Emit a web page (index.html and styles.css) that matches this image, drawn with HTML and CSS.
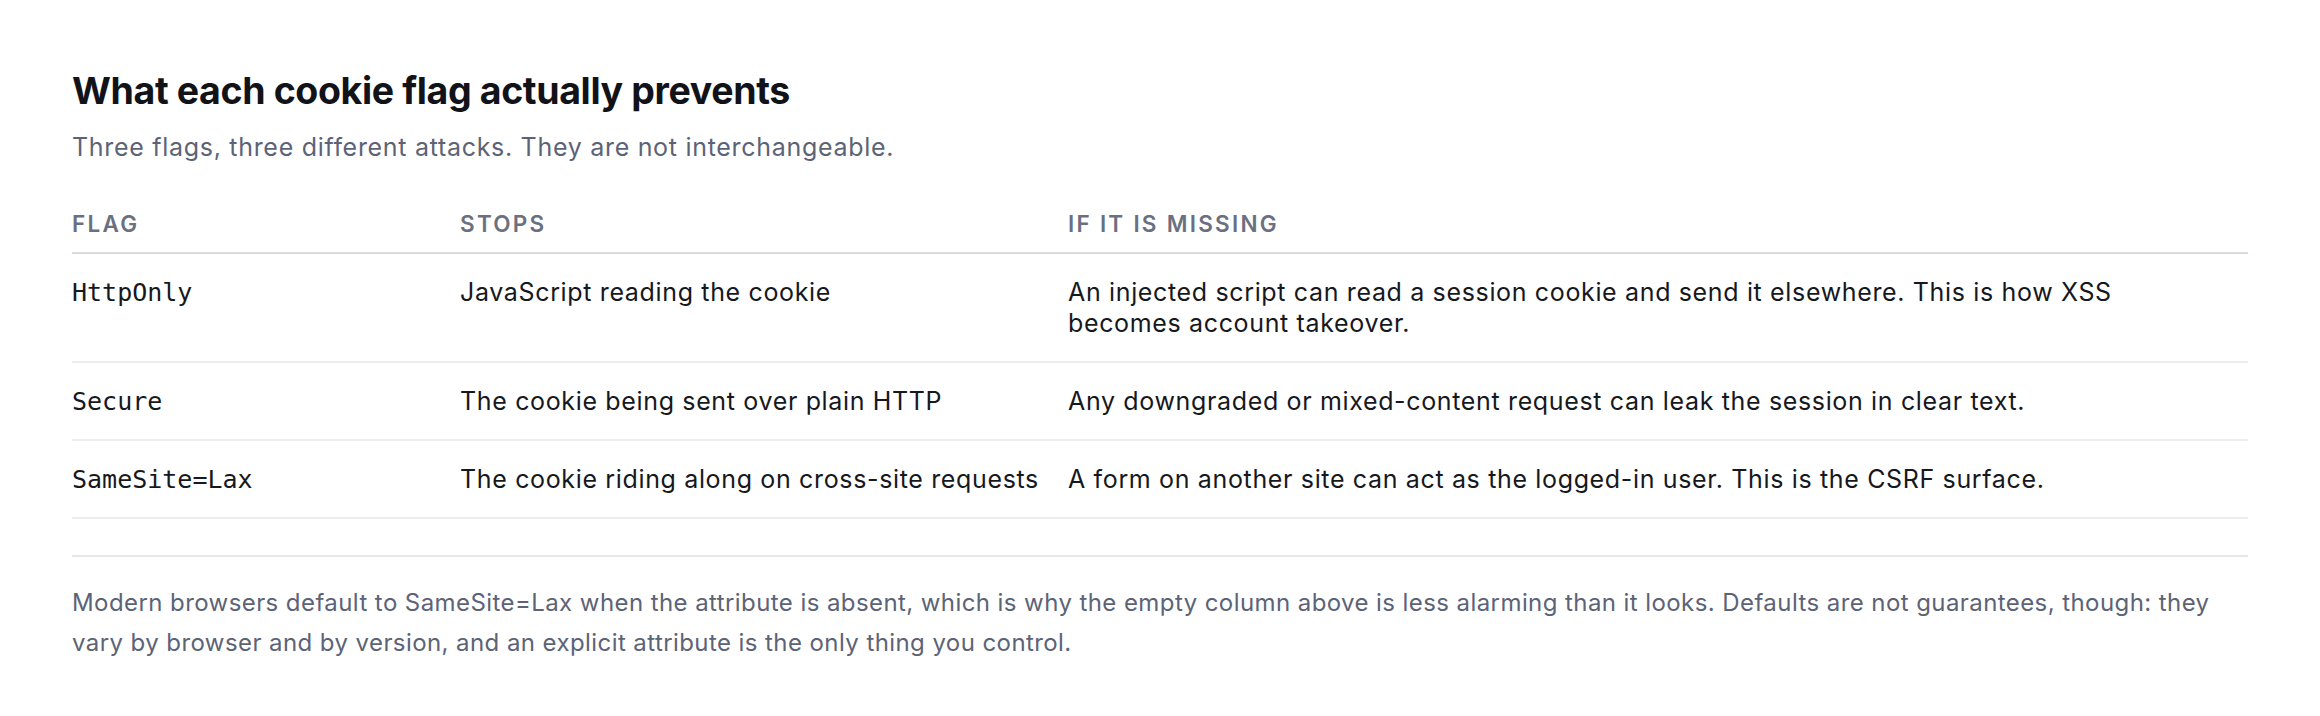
FILE: index.html
```html
<!DOCTYPE html>
<html lang="en">
<head>
    <meta charset="UTF-8">
    <meta name="viewport" content="width=device-width, initial-scale=1.0">
    <title>Cookie flags</title>
    <link rel="stylesheet" href="styles.css">
</head>
<body>
    <main class="page">
        <!-- Titolo e sottotitolo -->
        <h1 class="title">What each cookie flag actually prevents</h1>
        <p class="subtitle">Three flags, three different attacks. They are not interchangeable.</p>

        <!-- Tabella dei flag -->
        <table class="flags">
            <colgroup>
                <col class="col-flag">
                <col class="col-stops">
                <col>
            </colgroup>
            <thead>
                <tr>
                    <th>Flag</th>
                    <th>Stops</th>
                    <th>If it is missing</th>
                </tr>
            </thead>
            <tbody>
                <tr>
                    <td><code>HttpOnly</code></td>
                    <td>JavaScript reading the cookie</td>
                    <td>An injected script can read a session cookie and send it elsewhere. This is how XSS becomes account takeover.</td>
                </tr>
                <tr>
                    <td><code>Secure</code></td>
                    <td>The cookie being sent over plain HTTP</td>
                    <td>Any downgraded or mixed-content request can leak the session in clear text.</td>
                </tr>
                <tr>
                    <td><code>SameSite=Lax</code></td>
                    <td>The cookie riding along on cross-site requests</td>
                    <td>A form on another site can act as the logged-in user. This is the CSRF surface.</td>
                </tr>
            </tbody>
        </table>

        <!-- Nota finale -->
        <p class="note">Modern browsers default to SameSite=Lax when the attribute is absent, which is why the empty column above is less alarming than it looks. Defaults are not guarantees, though: they vary by browser and by version, and an explicit attribute is the only thing you control.</p>
    </main>
</body>
</html>
```

FILE: styles.css
```css
body {
    font-family: Inter, "Noto Sans", sans-serif;
    margin: 0;
    padding: 0;
    background-color: #fff;
    color: #16181d;
}

.page {
    padding: 68px 72px 40px;
}

.title {
    font-size: 37.5px;
    line-height: 1.2;
    font-weight: 700;
    letter-spacing: -0.01em;
    color: #121318;
    margin: 0;
}

.subtitle {
    font-size: 25px;
    line-height: 1.4;
    letter-spacing: 0.7px;
    color: #5c6377;
    margin: 17px 0 0;
}

.flags {
    width: 100%;
    border-collapse: collapse;
    table-layout: fixed;
    margin-top: 32px;
}

.col-flag {
    width: 388px;
}

.col-stops {
    width: 608px;
}

.flags th {
    text-align: left;
    font-size: 22.5px;
    line-height: 1.3;
    font-weight: 600;
    letter-spacing: 0.1em;
    text-transform: uppercase;
    color: #6b7080;
    padding: 12px 0 14px;
    border-bottom: 2px solid #d9dbe4;
}

.flags td {
    font-size: 25px;
    line-height: 31px;
    letter-spacing: 0.65px;
    vertical-align: top;
    padding: 23px 20px 22px 0;
    border-bottom: 2px solid #ededf1;
}

.flags code {
    font-family: "DejaVu Sans Mono", monospace;
    font-size: 25px;
    letter-spacing: 0;
}

.note {
    margin: 36px 0 0;
    padding-top: 26px;
    border-top: 2px solid #e6e7ec;
    font-size: 24px;
    line-height: 40px;
    letter-spacing: 0.42px;
    color: #5c6377;
}
```
